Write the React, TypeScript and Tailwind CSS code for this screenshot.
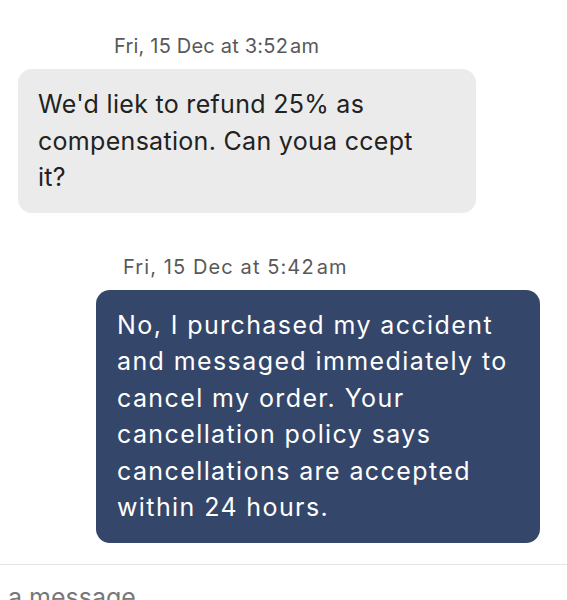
export default function App() {
  return (
    <div className="h-[600px] w-[567px] overflow-hidden bg-white font-['Inter',sans-serif]">
      <div className="pt-[34px]">
        {/* incoming */}
        <div className="pl-[114px] text-[20px] leading-[24px] tracking-[0.2px] text-[#595959]">
          Fri, 15 Dec at 3:52<span className="ml-[2px]">am</span>
        </div>
        <div className="ml-[18px] mt-[11px] w-[458px] rounded-[14px] bg-[#ebebeb] py-[17px] pl-[20px] pr-[34px] text-[25px] leading-[36.5px] tracking-[0.3px] text-[#222222]">
          We'd liek to refund 25% as compensation. Can youa ccept it?
        </div>

        {/* outgoing */}
        <div className="mt-[42px] pl-[123px] text-[20px] leading-[24px] tracking-[1.1px] text-[#595959]">
          Fri, 15 Dec at 5:42<span className="ml-[2px]">am</span>
        </div>
        <div className="ml-[96px] mt-[11px] w-[444px] rounded-[14px] bg-[#34466a] py-[17px] pl-[21px] pr-[20px] text-[25px] leading-[36.6px] tracking-[1.4px] text-white">
          No, I purchased my accident and messaged immediately to cancel my
          order. Your cancellation policy says cancellations are accepted within
          24 hours.
        </div>
      </div>

      <div className="mt-[21px] border-t border-[#e5e5e5] pl-[8px] pt-[14px] text-[25px] leading-[36px] text-[#777777]">
        a message
      </div>
    </div>
  );
}
